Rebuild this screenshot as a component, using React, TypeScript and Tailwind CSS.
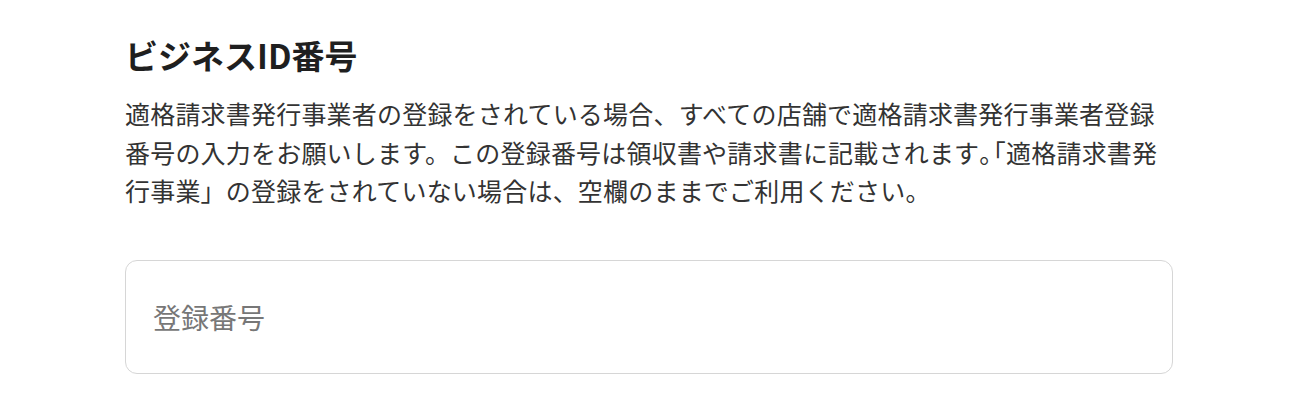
import React from "react";

export default function App() {
  return (
    <div
      className="w-[1290px] h-[408px] bg-white"
      style={{ fontFamily: '"Noto Sans CJK JP", "Noto Sans", sans-serif' }}
    >
      <div className="ml-[125px] w-[1048px] pt-[35px]">
        <h2 className="text-[33px] leading-[41px] font-bold text-[#1f1f1f]">
          ビジネスID番号
        </h2>
        <p className="mt-[18px] text-[25px] leading-[38.5px] tracking-[0.2px] text-[#333333]">
          適格請求書発行事業者の登録をされている場合、すべての店舗で適格請求書発行事業者登録番号の入力をお願いします。この登録番号は領収書や請求書に記載されます
          <span className="tracking-[-11px]">。</span>
          「適格請求書発行事業」の登録をされていない場合は、空欄のままでご利用ください。
        </p>
        <input
          type="text"
          placeholder="登録番号"
          className="mt-[50px] block w-[1048px] h-[114px] rounded-[12px] border border-[#d6d6d6] bg-white px-[27px] text-[28px] text-[#333] placeholder:text-[#777777] outline-none"
          style={{ fontFamily: '"Noto Sans CJK JP", "Noto Sans", sans-serif' }}
        />
      </div>
    </div>
  );
}
